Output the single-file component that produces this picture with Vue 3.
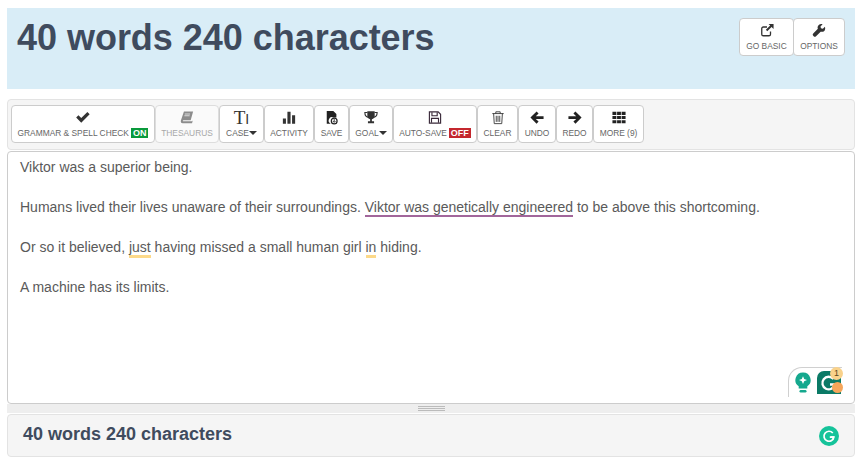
<script setup>
const buttons = [
  { id: 'check', label: 'Grammar & Spell Check', badge: 'ON', badgeClass: 'on', w: 144 },
  { id: 'book', label: 'Thesaurus', disabled: true, w: 64 },
  { id: 'case', label: 'Case', caret: true, w: 45 },
  { id: 'bars', label: 'Activity', w: 50 },
  { id: 'save', label: 'Save', w: 35 },
  { id: 'trophy', label: 'Goal', caret: true, w: 44 },
  { id: 'floppy', label: 'Auto-Save', badge: 'OFF', badgeClass: 'off', w: 84 },
  { id: 'trash', label: 'Clear', w: 41 },
  { id: 'left', label: 'Undo', w: 38 },
  { id: 'right', label: 'Redo', w: 37 },
  { id: 'grid', label: 'More (9)', w: 51 },
]
</script>

<template>
  <div class="page">
    <header class="head">
      <h1>40 words 240 characters</h1>
      <div class="head-actions">
        <button class="tool head-tool">
          <svg class="ico" viewBox="0 0 16 16"><path d="M12 9v3.200A1.800 1.800 0 0 1 10.200 14H3.800A1.800 1.800 0 0 1 2 12.200V5.800A1.800 1.800 0 0 1 3.800 4H8" fill="none" stroke="#333" stroke-width="1.500"/><path d="M15.500 .5H9.800l1.800 1.800L6.700 7.200l1.600 1.600 4.900-4.900 2.300 2.300z" fill="#333"/></svg>
          <span class="label">Go Basic</span>
        </button>
        <button class="tool head-tool">
          <svg class="ico" viewBox="0 0 16 16"><path d="M14.800 3.600 12.400 6l-2.200-.5L9.700 3.300 12.100.9c-1.700-.5-3.500-.1-4.600 1.100C6.400 3.100 6.100 4.700 6.700 6.100L1.400 11.400a1.900 1.900 0 0 0 0 2.700l.5.5a1.900 1.900 0 0 0 2.700 0l5.300-5.300c1.400.5 3 .3 4.100-.8 1.100-1.200 1.400-3.200.8-4.900z" fill="#333"/></svg>
          <span class="label">Options</span>
        </button>
      </div>
    </header>

    <nav class="toolbar">
      <button v-for="b in buttons" :key="b.id" class="tool" :class="{ disabled: b.disabled }" :style="{ width: b.w + 'px' }">
        <svg v-if="b.id === 'check'" class="ico" viewBox="0 0 16 16"><path d="M2.800 5.500 6 8.700 13 1.700l2.600 2.600L6 13.900.2 8.100z" fill="#333"/></svg>
        <svg v-else-if="b.id === 'book'" class="ico" viewBox="0 0 16 16"><path d="M4.500 1h10.500l-2.800 10H4c-1 0-1.100 1.400 0 1.400h9.500l1-.9-.7 3H3c-1.700 0-2.400-1.700-2-3.200z" fill="#8c8c8c"/><path d="M5.500 4h6M5 6h6" stroke="#fafafa" stroke-width=".8"/></svg>
        <span v-else-if="b.id === 'case'" class="ti">T<i>I</i></span>
        <svg v-else-if="b.id === 'bars'" class="ico" viewBox="0 0 16 16"><path d="M1 9h3.500v6H1zM6.200 1.500h3.600V15H6.200zM11.500 5.500H15V15h-3.500z" fill="#333"/></svg>
        <svg v-else-if="b.id === 'save'" class="ico" viewBox="0 0 16 16"><path d="M2 .5h7.500L13 4v4H9.500A3.800 3.800 0 0 0 6.500 15H2z" fill="#222"/><circle cx="10.500" cy="12" r="3.300" fill="none" stroke="#222" stroke-width="1.400"/><path d="M10.500 9.800v3M9 12l1.500 1.600L12 12" stroke="#222" fill="none"/></svg>
        <svg v-else-if="b.id === 'trophy'" class="ico" viewBox="0 0 16 16"><path d="M3.800 .8h8.400V6a4.200 4.200 0 0 1-3.200 4v2.200h2.500v2.500H4.500v-2.500H7V10A4.200 4.200 0 0 1 3.800 6z" fill="#333"/><path d="M4 2.300H1c0 3.200 1.200 5 4 5.500M12 2.300h3c0 3.200-1.200 5-4 5.500" fill="none" stroke="#333" stroke-width="1.300"/></svg>
        <svg v-else-if="b.id === 'floppy'" class="ico" viewBox="0 0 16 16"><path d="M1.600 1.600h10L14.400 4.400V14.400H1.600z" fill="none" stroke="#3a2a3a" stroke-width="1.300"/><path d="M4.500 2v4h6V2M4 14V9h8v5" fill="none" stroke="#3a2a3a" stroke-width="1.300"/></svg>
        <svg v-else-if="b.id === 'trash'" class="ico" viewBox="0 0 16 16"><path d="M1.500 3.500h13M5.500 3.500V1.500h5v2M3 3.500l.7 11.500h8.600L13 3.500M6 6v7M8 6v7M10 6v7" fill="none" stroke="#333" stroke-width="1"/></svg>
        <svg v-else-if="b.id === 'left'" class="ico" viewBox="0 0 16 16"><path d="M7.500 1.200 9.800 3.500 6.600 6.600h8.900v3H6.600l3.200 3.100-2.300 2.300L.5 8.100z" fill="#222"/></svg>
        <svg v-else-if="b.id === 'right'" class="ico" viewBox="0 0 16 16"><path d="M8.500 1.200 6.200 3.500l3.200 3.100H.5v3h8.900l-3.200 3.100 2.300 2.300 7-6.900z" fill="#222"/></svg>
        <svg v-else class="ico" viewBox="0 0 16 16"><path d="M.5 1.500H5v3.500H.5zM5.800 1.500h4.400v3.500H5.800zM11 1.500h4.500v3.500H11zM.5 6.200H5v3.600H.5zM5.800 6.200h4.400v3.600H5.800zM11 6.200h4.500v3.600H11zM.5 11H5v3.500H.5zM5.800 11h4.400v3.500H5.800zM11 11h4.500v3.500H11z" fill="#222"/></svg>
        <span class="label">
          {{ b.label }}<b v-if="b.badge" class="badge" :class="b.badgeClass">{{ b.badge }}</b><i v-if="b.caret" class="caret"></i>
        </span>
      </button>
    </nav>

    <main class="editor">
      <p>Viktor was a superior being.</p>
      <p>Humans lived their lives unaware of their surroundings. <span class="style-mark">Viktor was genetically engineered</span> to be above this shortcoming.</p>
      <p>Or so it believed, <span class="word-mark">just</span> having missed a small human girl <span class="word-mark">in</span> hiding.</p>
      <p>A machine has its limits.</p>
      <div class="grammarly">
        <svg width="16" height="21" viewBox="0 0 16 21"><path d="M8 .5a7.500 7.500 0 0 1 4.300 13.700v2.300H3.700v-2.300A7.500 7.500 0 0 1 8 .5z" fill="#15a88e"/><path d="M8 4.200l1.200 2.700L12 8l-2.800 1.200L8 12l-1.200-2.800L4 8l2.800-1.100z" fill="#fff"/><rect x="4.500" y="18" width="7" height="2.500" rx="1.200" fill="#15a88e"/></svg>
        <div class="g-logo">
          <svg width="24" height="23" viewBox="0 0 24 23"><path d="M0 23V7a7 7 0 0 1 7-7h17v23z" fill="#0b7a66"/><path d="M16.500 8a6.300 6.300 0 1 0 1.300 5.500H13" fill="none" stroke="#fff" stroke-width="2.300"/></svg>
          <span class="g-count">1</span>
          <span class="g-dot"></span>
        </div>
      </div>
    </main>

    <div class="handle"><span></span></div>

    <footer class="foot">
      <strong>40 words 240 characters</strong>
      <svg width="20" height="20" viewBox="0 0 20 20"><circle cx="10" cy="10" r="10" fill="#15c39a"/><path d="M13.800 7a5 5 0 1 0 1.100 4.200H10.800" fill="none" stroke="#fff" stroke-width="1.700"/><path d="M14.200 13.500v-2.500h-2.500" fill="none" stroke="#fff" stroke-width="1.700"/></svg>
    </footer>
  </div>
</template>

<style scoped>
.page {
  width: 861px;
  height: 462px;
  box-sizing: border-box;
  padding: 8px 6px 0 7px;
  font-family: "Liberation Sans", Arial, sans-serif;
  color: #555;
  background: #fff;
  display: flex;
  flex-direction: column;
  overflow: hidden;
}
.head {
  height: 81px;
  background: #d9edf7;
  display: flex;
  justify-content: space-between;
  align-items: flex-start;
  padding: 10px 10px 0 10px;
  box-sizing: border-box;
}
.head h1 {
  margin: 0;
  font-size: 36px;
  line-height: 40px;
  font-weight: 700;
  letter-spacing: -0.03px;
  color: #3f4b5e;
}
.head-actions {
  display: flex;
}
.head-tool {
  width: 55px;
  height: 37px;
  padding-top: 5px;
}
.head-tool + .head-tool {
  width: 52px;
  margin-left: -1px;
}
.toolbar {
  margin-top: 10px;
  height: 51px;
  box-sizing: border-box;
  display: flex;
  align-items: flex-start;
  padding: 5px 3px 0;
  background: #f5f5f5;
  border: 1px solid #e3e3e3;
  border-radius: 4px;
}
.tool {
  height: 38px;
  box-sizing: border-box;
  flex: none;
  background: #fff;
  border: 1px solid #ccc;
  border-radius: 4px;
  font-family: inherit;
  color: #666;
  display: flex;
  flex-direction: column;
  align-items: center;
  justify-content: flex-start;
  padding: 4px 0 0;
}
.tool.disabled {
  background: #fafafa;
  border-color: #ddd;
  color: #a8a8a8;
}
.ico {
  width: 14px;
  height: 15px;
  display: block;
}
.ti {
  height: 15px;
  line-height: 15px;
  font-family: "Liberation Serif", serif;
  font-size: 19px;
  color: #333;
}
.ti i {
  font-style: normal;
  font-family: "Liberation Sans", sans-serif;
  font-size: 14px;
  font-weight: 300;
}
.label {
  margin-top: 3px;
  font-size: 8.4px;
  line-height: 11px;
  text-transform: uppercase;
  white-space: nowrap;
  display: flex;
  align-items: center;
}
.badge {
  margin-left: 2px;
  padding: 0 2px;
  color: #fff;
  font-size: 9px;
  line-height: 10px;
  font-weight: 700;
  position: relative;
  top: -1px;
}
.badge.on { background: #0a9a3c; }
.badge.off { background: #c4272e; }
.caret {
  width: 0;
  height: 0;
  border-left: 4px solid transparent;
  border-right: 4px solid transparent;
  border-top: 4px solid #333;
  margin-top: -2px;
}
.editor {
  position: relative;
  margin-top: 1px;
  height: 253px;
  box-sizing: border-box;
  padding: 5px 12px 0;
  background: #fff;
  border: 1px solid #ccc;
  border-radius: 4px;
  font-size: 14px;
  line-height: 20px;
  color: #5a5a5a;
}
.editor p {
  margin: 0 0 20px;
  white-space: nowrap;
}
.style-mark {
  border-bottom: 2px solid #a2669b;
}
.word-mark {
  border-bottom: 3px solid #fcd98a;
}
.grammarly {
  position: absolute;
  right: 12px;
  bottom: 6px;
  width: 54px;
  height: 30px;
  box-sizing: border-box;
  background: #fff;
  border: 1px solid #d0d0d0;
  border-right: 0;
  border-bottom: 0;
  border-radius: 14px 0 14px 0;
  display: flex;
  align-items: center;
  gap: 6px;
  padding-left: 6px;
}
.g-logo {
  position: relative;
  width: 24px;
  height: 23px;
  line-height: 0;
}
.g-count {
  position: absolute;
  right: -2px;
  top: -4px;
  width: 13px;
  height: 13px;
  border-radius: 50%;
  background: #f9d28b;
  color: #5b4a22;
  font-size: 9px;
  line-height: 13px;
  text-align: center;
}
.g-dot {
  position: absolute;
  right: -2px;
  bottom: 1px;
  width: 11px;
  height: 11px;
  border-radius: 50%;
  background: #f6a65a;
}
.handle {
  height: 9px;
  background: #eee;
  display: flex;
  justify-content: center;
  align-items: center;
}
.handle span {
  width: 27px;
  height: 3px;
  border-top: 1px solid #bbb;
  border-bottom: 1px solid #bbb;
  background: linear-gradient(#bbb, #bbb) center / 100% 1px no-repeat;
}
.foot {
  margin-top: 1px;
  height: 43px;
  box-sizing: border-box;
  background: #f5f5f5;
  border: 1px solid #e3e3e3;
  border-radius: 4px;
  display: flex;
  align-items: center;
  justify-content: space-between;
  padding: 0 15px;
}
.foot strong {
  font-size: 18px;
  line-height: 20px;
  margin-top: -4px;
  color: #3f4b5e;
}
</style>
